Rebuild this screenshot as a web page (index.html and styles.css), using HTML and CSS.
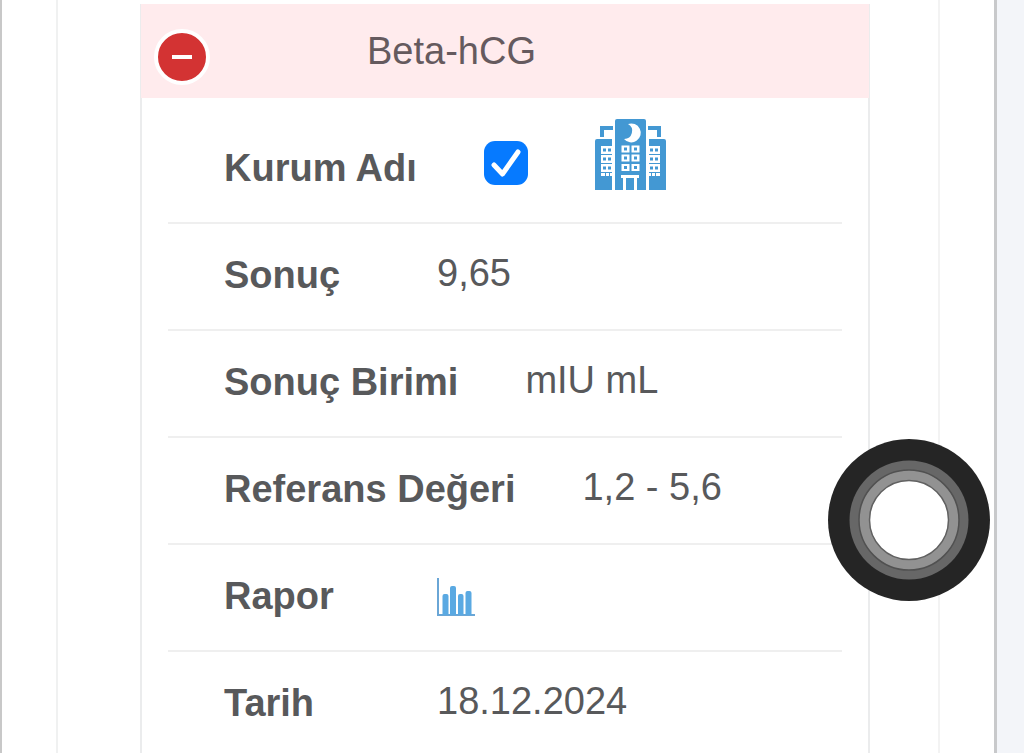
FILE: index.html
```html
<!DOCTYPE html>
<html lang="tr">
<head>
    <meta charset="UTF-8">
    <meta name="viewport" content="width=device-width, initial-scale=1.0">
    <title>Beta-hCG</title>
    <link rel="stylesheet" href="styles.css">
</head>
<body>
    <main class="page">
        <div class="panel">
            <section class="result">
                <header class="result-head">
                    <button class="toggle" type="button" aria-label="Kapat" aria-expanded="true"></button>
                    <span class="result-name">Beta-hCG</span>
                </header>
                <div class="details">
                    <div class="row row-tall">
                        <label class="label" for="kurum">Kurum Adı</label>
                        <span class="check">
                            <input type="checkbox" id="kurum" checked>
                            <svg class="tick" viewBox="0 0 44 44" aria-hidden="true">
                                <path d="M10 24L18.500 33L34 11" fill="none" stroke="#fff" stroke-width="5" stroke-linecap="round" stroke-linejoin="round"/>
                            </svg>
                        </span>
                        <svg class="hospital" viewBox="0 0 71 71" aria-hidden="true">
                            <g fill="#4398d3">
                                <path d="M5 7h13v4H9v7H5zM53 7h13v11h-4v-7h-9z"/>
                                <path d="M2 20h15v51H0V22q0-2 2-2zM54 20h15q2 0 2 2v49H54z"/>
                                <path d="M22 0h27q2 0 2 2v69H20V2q0-2 2-2z"/>
                            </g>
                            <g fill="#fff">
                                <path d="M33 5A9.500 9.500 0 1 1 29 20A8 8 0 0 0 33 5z"/>
                                <path d="M6 27h11v8H6zM6 36h11v8H6zM6 45h11v8H6zM6 54h4v3H6zM11 54h3v3h-3zM15 54h2v3h-2z"/>
                                <path d="M54 27h11v8H54zM54 36h11v8H54zM54 45h11v8H54zM61 54h4v3h-4zM57 54h3v3h-3zM54 54h2v3h-2z"/>
                                <path d="M26.500 26.500h8v7h-8zM36.500 26.500h8v7h-8zM26.500 35.500h8v7h-8zM36.500 35.500h8v7h-8zM26.500 45h8v7h-8zM36.500 45h8v7h-8z"/>
                                <path d="M26 56h18v3h-2v12h-3V59h-8v12h-3V59h-2z"/>
                            </g>
                            <g fill="#4398d3">
                                <path d="M8 29.500h3v3H8zM13 29.500h3v3h-3zM8 38.500h3v3H8zM13 38.500h3v3h-3zM8 47.500h3v3H8zM13 47.500h3v3h-3z"/>
                                <path d="M55 29.500h3v3h-3zM60 29.500h3v3h-3zM55 38.500h3v3h-3zM60 38.500h3v3h-3zM55 47.500h3v3h-3zM60 47.500h3v3h-3z"/>
                                <path d="M29 28.500h3v3h-3zM39 28.500h3v3h-3zM29 37.500h3v3h-3zM39 37.500h3v3h-3zM29 47h3v3h-3zM39 47h3v3h-3z"/>
                            </g>
                        </svg>
                    </div>
                    <div class="row">
                        <span class="label">Sonuç</span>
                        <span class="value">9,65</span>
                    </div>
                    <div class="row">
                        <span class="label">Sonuç Birimi</span>
                        <span class="value">mIU mL</span>
                    </div>
                    <div class="row">
                        <span class="label">Referans Değeri</span>
                        <span class="value">1,2 - 5,6</span>
                    </div>
                    <div class="row">
                        <span class="label">Rapor</span>
                        <a class="report" href="#" aria-label="Rapor">
                            <svg viewBox="0 0 38 38" aria-hidden="true">
                                <path d="M1 0V37H38" fill="none" stroke="#6aa6d6" stroke-width="2"/>
                                <path d="M5.500 37V18q0-2 2-2h2q2 0 2 2V37zM13 37V10q0-2 2-2h2q2 0 2 2V37zM21 37V18q0-2 2-2h1.500q2 0 2 2V37zM28.500 37V15q0-2 2-2h2q2 0 2 2V37z" fill="#5aa9e2"/>
                            </svg>
                        </a>
                    </div>
                    <div class="row">
                        <span class="label">Tarih</span>
                        <span class="value">18.12.2024</span>
                    </div>
                </div>
            </section>
        </div>
    </main>
    <button class="assist" type="button" aria-label="Menü">
        <svg viewBox="0 0 162 162" aria-hidden="true">
            <circle cx="81" cy="81" r="81" fill="#252525"/>
            <circle cx="81" cy="81" r="59.500" fill="#676767"/>
            <circle cx="81" cy="81" r="50" fill="#929292" stroke="#515151" stroke-width="1.500"/>
            <circle cx="81" cy="81" r="39.500" fill="#fff" stroke="#616161" stroke-width="1.500"/>
        </svg>
    </button>
</body>
</html>
```
FILE: styles.css
```css
*{
    box-sizing: border-box;
}
body{
    margin: 0;
    min-height: 100vh;
    display: flex;
    background-color: #f3f5f9;
    color: #58595b;
    font-family: "Liberation Sans", Arial, sans-serif;
    font-size: 38px;
    line-height: 44px;
}
.page{
    flex: 1;
    display: flex;
    margin-right: 27px;
    padding: 0 54px;
    background-color: white;
    border-left: 2px solid #c8c8c8;
    border-right: 3px solid #c8c9cb;
}
.panel{
    flex: 1;
    display: flex;
    padding: 4px 68px 0 82px;
    border-left: 2px solid #f0f1f1;
    border-right: 2px solid #f3f3f3;
}
.result{
    flex: 1;
    border-left: 2px solid #ebeced;
    border-right: 2px solid #ebeced;
}
.result-head{
    height: 94px;
    display: flex;
    align-items: center;
    margin: 0 -1px;
    padding: 0 13px;
    background-color: #ffebed;
}
.toggle{
    width: 56px;
    height: 56px;
    display: flex;
    align-items: center;
    justify-content: center;
    margin-top: 12px;
    padding: 0;
    border: 4px solid white;
    border-radius: 50%;
    background-color: #d33333;
}
.toggle::before{
    content: "";
    width: 20px;
    height: 4px;
    background-color: white;
}
.result-name{
    flex: 1;
    padding-right: 163px;
    text-align: center;
    color: #655a5e;
}
.details{
    padding: 0 26px;
}
.row{
    min-height: 107px;
    display: flex;
    align-items: flex-end;
    gap: 67px;
    padding: 27px 56px 32px;
    border-bottom: 2px solid #efefef;
}
.row-tall{
    padding-top: 21px;
}
.row:last-child{
    min-height: 0;
    padding-bottom: 0;
    border-bottom: none;
}
.label{
    min-width: 146px;
    font-weight: bold;
}
.value{
    padding-bottom: 2px;
}
.check{
    position: relative;
    width: 44px;
    height: 44px;
    margin-bottom: 5px;
}
.check input{
    appearance: none;
    display: block;
    width: 44px;
    height: 44px;
    margin: 0;
    border-radius: 11px;
    background-color: white;
    border: 2px solid #c8c8c8;
}
.check input:checked{
    border: none;
    background-color: #067aff;
}
.tick{
    position: absolute;
    inset: 0;
    pointer-events: none;
}
.hospital{
    width: 71px;
    height: 71px;
}
.report{
    display: block;
    width: 38px;
    height: 38px;
    margin-bottom: 2px;
}
.report svg,
.assist svg{
    display: block;
}
.assist{
    position: fixed;
    top: 439px;
    right: 34px;
    width: 162px;
    height: 162px;
    padding: 0;
    border: none;
    border-radius: 50%;
    background: none;
}
```
